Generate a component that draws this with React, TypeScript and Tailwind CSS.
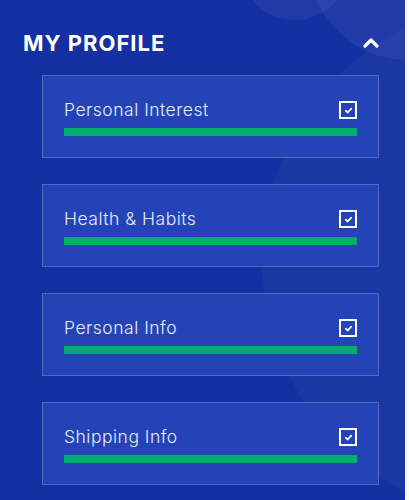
import { ChevronUp } from 'lucide-react';

const sections = ['Personal Interest', 'Health & Habits', 'Personal Info', 'Shipping Info'];

function CheckBox() {
  return (
    <span className="flex h-[18px] w-[18px] items-center justify-center border-2 border-white">
      <svg viewBox="0 0 10 10" className="h-[9px] w-[9px]" fill="none" stroke="white" strokeWidth="2" strokeLinecap="round" strokeLinejoin="round">
        <path d="M2 5.2 4.2 7.2 8 3" />
      </svg>
    </span>
  );
}

function SectionCard({ title }: { title: string }) {
  return (
    <div className="h-[83px] w-[337px] border border-white/20 bg-[#2443b6] px-[21px] pt-[22px]">
      <div className="flex h-[24px] items-center justify-between">
        <span className="text-[17.5px] font-light leading-[24px] tracking-[0.5px] text-white/90">{title}</span>
        <CheckBox />
      </div>
      <div className="mt-[6px] h-[8px] w-full bg-[#00ad6d]" />
    </div>
  );
}

export default function App() {
  return (
    <div className="relative h-[500px] w-[405px] overflow-hidden bg-[#1530a2]" style={{ fontFamily: 'Inter, "Noto Sans", sans-serif' }}>
      {/* background decoration */}
      <div className="absolute -top-[90px] left-[240px] h-[110px] w-[110px] rounded-full bg-white/5" />
      <div className="absolute -top-[140px] left-[308px] h-[200px] w-[200px] rounded-full bg-white/5" />
      <div className="absolute top-[0px] left-[262px] h-[520px] w-[520px] rounded-full bg-white/[0.03]" />

      <div className="relative">
        <div className="flex items-center justify-between pl-[23px] pr-[22px] pt-[28px]">
          <h2 className="text-[22px] font-bold leading-[30px] tracking-[1px] text-white">MY PROFILE</h2>
          <ChevronUp className="h-[24px] w-[24px] text-white" strokeWidth={3.2} />
        </div>
        <div className="mt-[17px] flex flex-col gap-[26px] pl-[42px]">
          {sections.map((s) => (
            <SectionCard key={s} title={s} />
          ))}
        </div>
      </div>
    </div>
  );
}
